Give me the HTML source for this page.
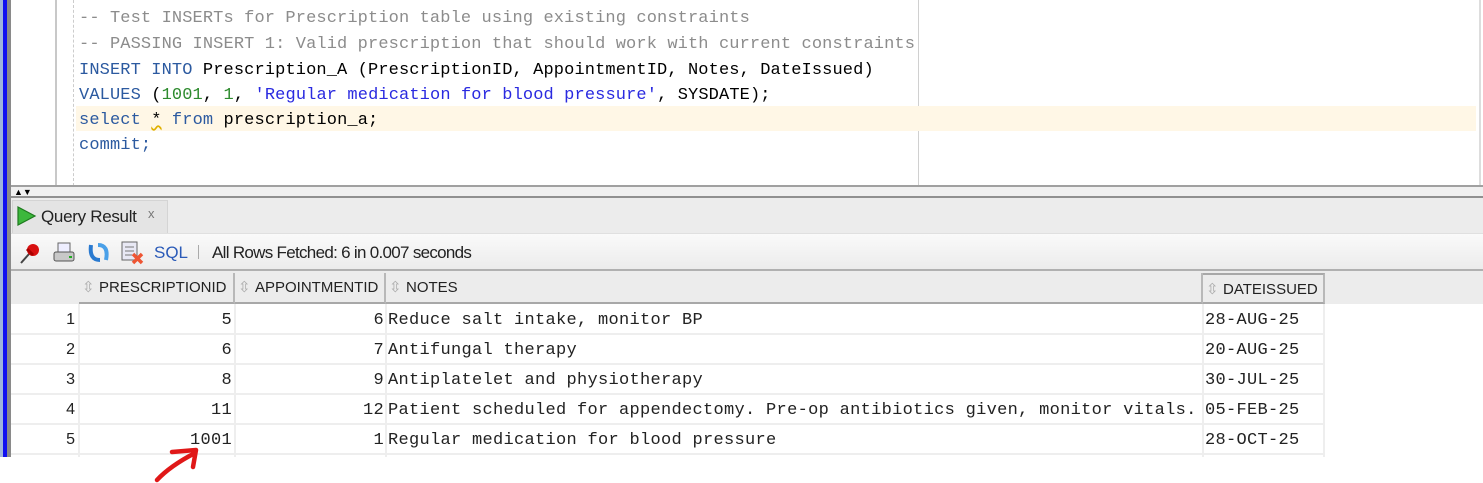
<!DOCTYPE html>
<html><head><style>
*{margin:0;padding:0;box-sizing:border-box}
body{width:1483px;height:483px;background:#fff;position:relative;overflow:hidden;font-family:"Liberation Sans",sans-serif}
.abs{position:absolute}
.code{font-family:"Liberation Mono",monospace;font-size:17px;letter-spacing:0.12px;white-space:pre;position:absolute;left:79px;line-height:20px}
.cm{color:#8c8c8c}.kw{color:#2c5aa0}.nm{color:#2e8b2e}.st{color:#2a2ae0}.tx{color:#000}
.cell{position:absolute;font-family:"Liberation Mono",monospace;font-size:17px;letter-spacing:0.3px;white-space:pre;color:#222;line-height:30px;height:30px}
.hd{position:absolute;top:273px;height:31px;background:#ececec;border-right:2px solid #b8b8b8;border-bottom:2px solid #a8a8a8;font-size:15px;color:#222;line-height:30px;padding-left:20px}
.hd:before{content:"⇳";position:absolute;left:3px;top:0;color:#aaa;font-size:15px}
.rn{position:absolute;left:11px;width:64px;text-align:right;font-size:16px;line-height:30px;color:#222}
</style></head><body>
<div class="abs" style="left:0;top:0;width:3px;height:457px;background:#9eb4dc"></div>
<div class="abs" style="left:3px;top:0;width:4px;height:457px;background:#1010f0"></div>
<div class="abs" style="left:7px;top:0;width:4px;height:457px;background:#8a8a8a"></div>
<div class="abs" style="left:55px;top:0;width:2px;height:186px;background:#c8c8c8"></div>
<div class="abs" style="left:73px;top:0;width:0;height:186px;border-left:1px dashed #ccc"></div>
<div class="abs" style="left:918px;top:0;width:1px;height:186px;background:#d0d0d0"></div>
<div class="abs" style="left:1479px;top:0;width:2px;height:186px;background:#ddd"></div>
<div class="abs" style="left:76px;top:106px;width:1400px;height:25px;background:#fff7e6"></div>
<div class="code cm" style="top:9px">-- Test INSERTs for Prescription table using existing constraints</div>
<div class="code cm" style="top:35px">-- PASSING INSERT 1: Valid prescription that should work with current constraints</div>
<div class="code" style="top:61px"><span class="kw">INSERT INTO</span><span class="tx"> Prescription_A (PrescriptionID, AppointmentID, Notes, DateIssued)</span></div>
<div class="code" style="top:86px"><span class="kw">VALUES</span><span class="tx"> (</span><span class="nm">1001</span><span class="tx">, </span><span class="nm">1</span><span class="tx">, </span><span class="st">'Regular medication for blood pressure'</span><span class="tx">, SYSDATE);</span></div>
<div class="code" style="top:111px"><span class="kw">select</span><span class="tx"> <span style="text-decoration:underline wavy #e0b000">*</span> </span><span class="kw">from</span><span class="tx"> prescription_a;</span></div>
<div class="code kw" style="top:136px">commit;</div>
<div class="abs" style="left:11px;top:185px;width:1472px;height:2px;background:#a0a0a0"></div>
<div class="abs" style="left:11px;top:187px;width:1472px;height:10px;background:#f0f0f0"></div>
<div class="abs" style="left:14px;top:188px;font-size:9px;line-height:9px;color:#000">▲▼</div>
<div class="abs" style="left:11px;top:196px;width:1472px;height:2px;background:#909090"></div>
<div class="abs" style="left:11px;top:198px;width:1472px;height:35px;background:#ececec"></div>
<div class="abs" style="left:12px;top:200px;width:156px;height:33px;background:#e4e4e4;border:1px solid #d4d4d4;border-bottom:none"></div>
<svg class="abs" style="left:16px;top:206px" width="22" height="20"><path d="M2 1 L19 10 L2 19 Z" fill="#3cb83c" stroke="#1e7a1e" stroke-width="1.2"/></svg>
<div class="abs" style="left:41px;top:207px;font-size:17px;color:#222;letter-spacing:-0.3px">Query Result</div>
<div class="abs" style="left:148px;top:206px;font-size:13px;color:#777">x</div>
<div class="abs" style="left:11px;top:233px;width:1472px;height:38px;background:linear-gradient(#fafafa,#ececec);border-top:1px solid #e0e0e0;border-bottom:2px solid #b0b0b0"></div>
<svg class="abs" style="left:18px;top:241px" width="24" height="24"><path d="M3 22 L11 13" stroke="#444" stroke-width="2"/><circle cx="15" cy="9" r="6" fill="#d81010"/><path d="M9 8 L15 14" stroke="#a00" stroke-width="3"/></svg>
<svg class="abs" style="left:52px;top:241px" width="24" height="24"><rect x="6" y="2" width="12" height="10" fill="#eef" stroke="#666"/><rect x="2" y="11" width="20" height="9" rx="2" fill="#c8c8c8" stroke="#555"/><rect x="17" y="15" width="3" height="2" fill="#2a2"/></svg>
<svg class="abs" style="left:86px;top:240px" width="26" height="26"><path d="M5 5 Q3 20 14 20" stroke="#2a7ad0" stroke-width="4" fill="none"/><path d="M20 20 Q23 5 12 5" stroke="#4aa0e8" stroke-width="4" fill="none"/></svg>
<svg class="abs" style="left:120px;top:240px" width="26" height="26"><rect x="2" y="2" width="15" height="18" fill="#e8e8f4" stroke="#666"/><path d="M5 7h9M5 11h9M5 15h7" stroke="#777"/><path d="M13 14 L22 23 M22 14 L13 23" stroke="#e53" stroke-width="3.5"/></svg>
<div class="abs" style="left:154px;top:243px;font-size:17px;color:#2a5ab8">SQL</div>
<div class="abs" style="left:198px;top:245px;width:1px;height:14px;background:#aaa"></div>
<div class="abs" style="left:212px;top:243px;font-size:17px;color:#222;letter-spacing:-0.7px">All Rows Fetched: 6 in 0.007 seconds</div>
<div class="abs" style="left:11px;top:271px;width:1472px;height:33px;background:#ececec"></div>
<div class="hd" style="left:79px;width:156px">PRESCRIPTIONID</div>
<div class="hd" style="left:235px;width:151px">APPOINTMENTID</div>
<div class="hd" style="left:386px;width:817px">NOTES</div>
<div class="hd" style="left:1203px;width:122px;border-top:2px solid #a8a8a8">DATEISSUED</div>
<div class="abs" style="left:11px;top:304px;width:1314px;height:153px;background:#fff"></div>
<div class="abs" style="left:78px;top:304px;width:2px;height:153px;background:#eee"></div>
<div class="abs" style="left:234px;top:304px;width:2px;height:153px;background:#eee"></div>
<div class="abs" style="left:385px;top:304px;width:2px;height:153px;background:#eee"></div>
<div class="abs" style="left:1202px;top:304px;width:2px;height:153px;background:#eee"></div>
<div class="abs" style="left:1323px;top:304px;width:2px;height:153px;background:#eee"></div>
<div class="abs" style="left:11px;top:333px;width:1314px;height:2px;background:#eee"></div>
<div class="abs" style="left:11px;top:363px;width:1314px;height:2px;background:#eee"></div>
<div class="abs" style="left:11px;top:393px;width:1314px;height:2px;background:#eee"></div>
<div class="abs" style="left:11px;top:423px;width:1314px;height:2px;background:#eee"></div>
<div class="abs" style="left:11px;top:453px;width:1314px;height:2px;background:#eee"></div>

<div class="rn" style="top:305px">1</div>
<div class="rn" style="top:335px">2</div>
<div class="rn" style="top:365px">3</div>
<div class="rn" style="top:395px">4</div>
<div class="rn" style="top:425px">5</div>

<div class="cell" style="top:306px;left:80px;width:152px;text-align:right">5</div>
<div class="cell" style="top:336px;left:80px;width:152px;text-align:right">6</div>
<div class="cell" style="top:366px;left:80px;width:152px;text-align:right">8</div>
<div class="cell" style="top:396px;left:80px;width:152px;text-align:right">11</div>
<div class="cell" style="top:426px;left:80px;width:152px;text-align:right">1001</div>

<div class="cell" style="top:306px;left:236px;width:148px;text-align:right">6</div>
<div class="cell" style="top:336px;left:236px;width:148px;text-align:right">7</div>
<div class="cell" style="top:366px;left:236px;width:148px;text-align:right">9</div>
<div class="cell" style="top:396px;left:236px;width:148px;text-align:right">12</div>
<div class="cell" style="top:426px;left:236px;width:148px;text-align:right">1</div>

<div class="cell" style="top:306px;left:388px">Reduce salt intake, monitor BP</div>
<div class="cell" style="top:336px;left:388px">Antifungal therapy</div>
<div class="cell" style="top:366px;left:388px">Antiplatelet and physiotherapy</div>
<div class="cell" style="top:396px;left:388px">Patient scheduled for appendectomy. Pre-op antibiotics given, monitor vitals.</div>
<div class="cell" style="top:426px;left:388px">Regular medication for blood pressure</div>

<div class="cell" style="top:306px;left:1205px">28-AUG-25</div>
<div class="cell" style="top:336px;left:1205px">20-AUG-25</div>
<div class="cell" style="top:366px;left:1205px">30-JUL-25</div>
<div class="cell" style="top:396px;left:1205px">05-FEB-25</div>
<div class="cell" style="top:426px;left:1205px">28-OCT-25</div>

<svg class="abs" style="left:140px;top:440px" width="70" height="43"><path d="M17 40 Q30 26 55 13" stroke="#e01818" stroke-width="4.5" fill="none" stroke-linecap="round"/><path d="M32 12 L56 10 L53 27" stroke="#e01818" stroke-width="4.5" fill="none" stroke-linecap="round" stroke-linejoin="round"/></svg>
</body></html>
